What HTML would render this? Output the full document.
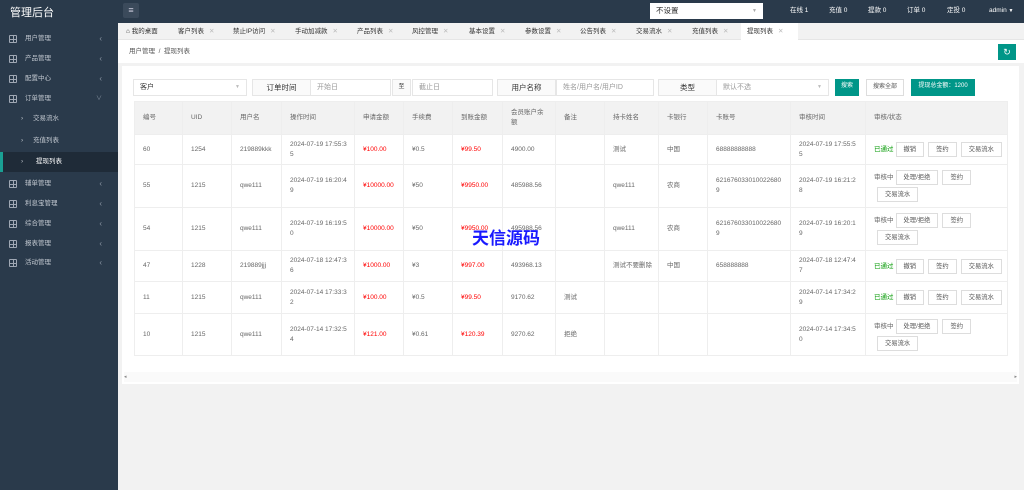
<!DOCTYPE html>
<html><head><meta charset="utf-8"><style>
*{margin:0;padding:0;box-sizing:border-box}
body{width:1024px;height:490px;overflow:hidden;background:#f2f2f2;font-family:"Liberation Sans","Noto Sans CJK SC",sans-serif;font-size:7px;color:#666;position:relative}
.side{position:absolute;left:0;top:0;width:118px;height:490px;background:#2a3a4b}
.logo{position:absolute;left:10px;top:4px;color:#fff;font-size:11px}
.top{position:absolute;left:118px;top:0;width:906px;height:23px;background:#2a3a4b}
.mi{position:absolute;left:0;width:118px;height:20px;color:#c2c8d0;font-size:6.5px;line-height:20px;padding-left:25px}
.mi .ic{position:absolute;left:9px;top:6px;width:8px;height:8px;border:1px solid #a0a8b4;border-radius:1px}
.mi .ic:before{content:"";position:absolute;left:3px;top:-1px;width:1px;height:8px;background:#a0a8b4}
.mi .ic:after{content:"";position:absolute;top:3px;left:-1px;height:1px;width:8px;background:#a0a8b4}
.mi .ar{position:absolute;right:16px;top:0;color:#8a96a4;font-size:8px}
.sub{padding-left:33px}
.sub .gt{position:absolute;left:21px;color:#c2c8d0}
.tabs{position:absolute;left:118px;top:23px;width:906px;height:17px;background:#f2f2f2;border-bottom:1px solid #e6e6e6}
.tab{position:absolute;top:0;height:17px;line-height:17px;font-size:6.5px;color:#333}
.tab i{font-style:normal;color:#bbb;margin-left:5px}
.bc{position:absolute;left:118px;top:40px;width:906px;height:23px;background:#fff;font-size:6.5px;line-height:23px;padding-left:11px;color:#555}
.card{position:absolute;left:122px;top:66px;width:897px;height:318px;background:#fff}
.inp{position:absolute;top:79px;height:17px;border:1px solid #e6e6e6;background:#fff;font-size:7px;line-height:15px;padding-left:6px;color:#999}
.lab{position:absolute;top:79px;height:17px;border:1px solid #e6e6e6;background:#fafafa;font-size:7.5px;line-height:15px;text-align:center;color:#333}
.btn{position:absolute;top:79px;height:17px;line-height:15px;font-size:6px;text-align:center}
table{position:absolute;left:134px;top:101px;border-collapse:collapse;table-layout:fixed}
td,th{border:1px solid #eee;font-weight:normal;text-align:left;padding:0 6px 0 8px;font-size:6.5px;color:#666;line-height:10px;vertical-align:middle;word-break:break-all}
th{background:#f2f2f2;height:33px}
.r{color:#f00}.g{color:#090}
.b{display:inline-block;border:1px solid #ddd;padding:0 7px;height:15px;line-height:13px;margin:1px 2px;color:#555;background:#fff;font-size:6.3px}
</style></head><body>
<div class="side">
<div class="logo">管理后台</div>
<div class="mi" style="top:29px"><span class="ic"></span>用户管理<span class="ar">‹</span></div>
<div class="mi" style="top:49px"><span class="ic"></span>产品管理<span class="ar">‹</span></div>
<div class="mi" style="top:69px"><span class="ic"></span>配置中心<span class="ar">‹</span></div>
<div class="mi" style="top:89px"><span class="ic"></span>订单管理<span class="ar" style="font-size:6px">∨</span></div>
<div class="mi sub" style="top:109px"><span class="gt">›</span>交易流水</div>
<div class="mi sub" style="top:131px"><span class="gt">›</span>充值列表</div>
<div class="mi sub" style="top:152px;background:#1f2b38;color:#fff;border-left:3px solid #1aa094"><span class="gt" style="left:18px">›</span>提现列表</div>
<div class="mi" style="top:174px"><span class="ic"></span>辅单管理<span class="ar">‹</span></div>
<div class="mi" style="top:194px"><span class="ic"></span>利息宝管理<span class="ar">‹</span></div>
<div class="mi" style="top:214px"><span class="ic"></span>综合管理<span class="ar">‹</span></div>
<div class="mi" style="top:234px"><span class="ic"></span>报表管理<span class="ar">‹</span></div>
<div class="mi" style="top:253px"><span class="ic"></span>活动管理<span class="ar">‹</span></div>
</div>
<div class="top">
<div style="position:absolute;left:5px;top:3px;width:16px;height:15px;background:#3b4a5b;border-radius:2px;color:#ccd;font-size:9px;text-align:center;line-height:15px">≡</div>
<div style="position:absolute;left:532px;top:3px;width:113px;height:16px;background:#fff;color:#333;font-size:7.5px;line-height:16px;padding-left:6px">不设置<span style="position:absolute;right:6px;color:#aaa;font-size:5px">▼</span></div>
<div style="position:absolute;left:672px;top:0;color:#fff;font-size:6.5px;line-height:22px">在线 1</div>
<div style="position:absolute;left:711px;top:0;color:#fff;font-size:6.5px;line-height:22px">充值 0</div>
<div style="position:absolute;left:750px;top:0;color:#fff;font-size:6.5px;line-height:22px">提款 0</div>
<div style="position:absolute;left:789px;top:0;color:#fff;font-size:6.5px;line-height:22px">订单 0</div>
<div style="position:absolute;left:829px;top:0;color:#fff;font-size:6.5px;line-height:22px">定投 0</div>
<div style="position:absolute;left:871px;top:0;color:#fff;font-size:6.5px;line-height:22px">admin <span style="font-size:5px">▼</span></div>
</div>
<div class="tabs">
<div class="tab" style="left:8px">⌂ 我的桌面</div>
<div class="tab" style="left:60px">客户列表<i>✕</i></div>
<div class="tab" style="left:115px">禁止IP访问<i>✕</i></div>
<div class="tab" style="left:177px">手动加减款<i>✕</i></div>
<div class="tab" style="left:239px">产品列表<i>✕</i></div>
<div class="tab" style="left:294px">风控管理<i>✕</i></div>
<div class="tab" style="left:351px">基本设置<i>✕</i></div>
<div class="tab" style="left:407px">参数设置<i>✕</i></div>
<div class="tab" style="left:462px">公告列表<i>✕</i></div>
<div class="tab" style="left:518px">交易流水<i>✕</i></div>
<div class="tab" style="left:574px">充值列表<i>✕</i></div>
<div class="tab" style="left:623px;width:57px;background:#fff;padding-left:6px;height:18px">提现列表<i>✕</i></div>
</div>
<div class="bc">用户管理 &nbsp;/&nbsp; 提现列表
<div style="position:absolute;left:880px;top:4px;width:18px;height:16px;background:#009688;color:#fff;text-align:center;line-height:16px;font-size:9px">↻</div></div>
<div class="card"></div>
<div class="inp" style="left:133px;width:114px;color:#333">客户<span style="position:absolute;right:6px;color:#bbb;font-size:5px">▼</span></div>
<div class="lab" style="left:252px;width:59px">订单时间</div>
<div class="inp" style="left:310px;width:81px">开始日</div>
<div class="lab" style="left:392px;width:19px;font-size:6px">至</div>
<div class="inp" style="left:412px;width:81px">截止日</div>
<div class="lab" style="left:497px;width:59px">用户名称</div>
<div class="inp" style="left:556px;width:98px">姓名/用户名/用户ID</div>
<div class="lab" style="left:658px;width:59px">类型</div>
<div class="inp" style="left:716px;width:113px">默认不选<span style="position:absolute;right:6px;color:#bbb;font-size:5px">▼</span></div>
<div class="btn" style="left:835px;width:24px;background:#009688;color:#fff">搜索</div>
<div class="btn" style="left:866px;width:38px;border:1px solid #ddd;color:#555">搜索全部</div>
<div class="btn" style="left:911px;width:64px;background:#009688;color:#fff">提现总金额：1200</div>
<table>
<colgroup><col style="width:48px"><col style="width:49px"><col style="width:50px"><col style="width:73px"><col style="width:49px"><col style="width:49px"><col style="width:50px"><col style="width:53px"><col style="width:49px"><col style="width:54px"><col style="width:49px"><col style="width:83px"><col style="width:75px"><col style="width:142px"></colgroup>
<tr><th>编号</th><th>UID</th><th>用户名</th><th>操作时间</th><th>申请金额</th><th>手续费</th><th>到账金额</th><th>会员账户余额</th><th>备注</th><th>持卡姓名</th><th>卡银行</th><th>卡账号</th><th>审核时间</th><th>审核/状态</th></tr>
<tr style="height:30px"><td>60</td><td>1254</td><td>219889kkk</td><td>2024-07-19&nbsp;17:55:35</td><td class="r">¥100.00</td><td>¥0.5</td><td class="r">¥99.50</td><td>4900.00</td><td></td><td>测试</td><td>中国</td><td>68888888888</td><td>2024-07-19&nbsp;17:55:55</td><td style="padding-right:0"><span class="g">已通过</span><span class="b">撤销</span><span class="b">签约</span><span class="b">交易流水</span></td></tr>
<tr style="height:43px"><td>55</td><td>1215</td><td>qwe111</td><td>2024-07-19&nbsp;16:20:49</td><td class="r">¥10000.00</td><td>¥50</td><td class="r">¥9950.00</td><td>485988.56</td><td></td><td>qwe111</td><td>农商</td><td>6216760330100226809</td><td>2024-07-19&nbsp;16:21:28</td><td style="padding-right:0">审核中<span class="b">处理/拒绝</span><span class="b">签约</span><br><span class="b" style="margin-left:3px">交易流水</span></td></tr>
<tr style="height:43px"><td>54</td><td>1215</td><td>qwe111</td><td>2024-07-19&nbsp;16:19:50</td><td class="r">¥10000.00</td><td>¥50</td><td class="r">¥9950.00</td><td>495988.56</td><td></td><td>qwe111</td><td>农商</td><td>6216760330100226809</td><td>2024-07-19&nbsp;16:20:19</td><td style="padding-right:0">审核中<span class="b">处理/拒绝</span><span class="b">签约</span><br><span class="b" style="margin-left:3px">交易流水</span></td></tr>
<tr style="height:31px"><td>47</td><td>1228</td><td>219889jjj</td><td>2024-07-18&nbsp;12:47:36</td><td class="r">¥1000.00</td><td>¥3</td><td class="r">¥997.00</td><td>493968.13</td><td></td><td>测试不要删除</td><td>中国</td><td>658888888</td><td>2024-07-18&nbsp;12:47:47</td><td style="padding-right:0"><span class="g">已通过</span><span class="b">撤销</span><span class="b">签约</span><span class="b">交易流水</span></td></tr>
<tr style="height:32px"><td>11</td><td>1215</td><td>qwe111</td><td>2024-07-14&nbsp;17:33:32</td><td class="r">¥100.00</td><td>¥0.5</td><td class="r">¥99.50</td><td>9170.62</td><td>测试</td><td></td><td></td><td></td><td>2024-07-14&nbsp;17:34:29</td><td style="padding-right:0"><span class="g">已通过</span><span class="b">撤销</span><span class="b">签约</span><span class="b">交易流水</span></td></tr>
<tr style="height:42px"><td>10</td><td>1215</td><td>qwe111</td><td>2024-07-14&nbsp;17:32:54</td><td class="r">¥121.00</td><td>¥0.61</td><td class="r">¥120.39</td><td>9270.62</td><td>拒绝</td><td></td><td></td><td></td><td>2024-07-14&nbsp;17:34:50</td><td style="padding-right:0">审核中<span class="b">处理/拒绝</span><span class="b">签约</span><br><span class="b" style="margin-left:3px">交易流水</span></td></tr>
</table>
<div style="position:absolute;left:472px;top:224px;color:#1a1aff;font-size:17px;font-weight:bold;font-family:'Noto Sans CJK SC',sans-serif">天信源码</div>
<div style="position:absolute;left:124px;top:372px;width:893px;height:10px;background:#fafafa;font-size:5px;color:#888;line-height:10px">◂<span style="position:absolute;right:0">▸</span></div>
</body></html>
